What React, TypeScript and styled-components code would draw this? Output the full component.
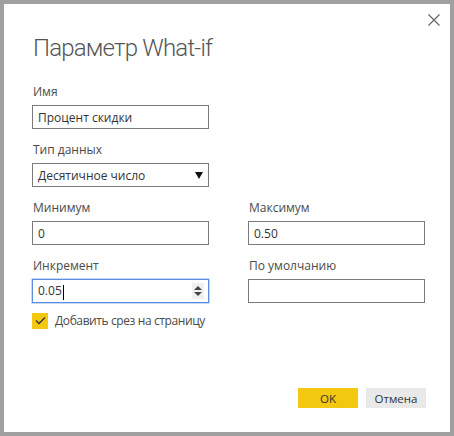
import React from "react";
import styled, { createGlobalStyle } from "styled-components";

const Global = createGlobalStyle`
  html, body { margin: 0; padding: 0; background: #a0a0a0; }
  body { font-family: "Segoe UI", "Open Sans", "Noto Sans", sans-serif; }
`;

const Dialog = styled.div`
  position: relative;
  box-sizing: border-box;
  width: 454px;
  height: 436px;
  border: 4px solid #a0a0a0;
  background: #fff;
  padding: 28px 0 0 28px;
  display: flex;
  flex-direction: column;
`;

const Close = styled.button`
  position: absolute;
  top: 6px;
  right: 6px;
  width: 20px;
  height: 20px;
  border: none;
  background: none;
  padding: 0;
  display: flex;
  align-items: center;
  justify-content: center;
`;

const Title = styled.h1`
  margin: 0 0 19px 1px;
  font-family: "Roboto", "Open Sans", sans-serif;
  font-weight: 300;
  font-size: 24px;
  line-height: 32px;
  color: #555;
  letter-spacing: -0.8px;
`;

const Grid = styled.div`
  display: grid;
  grid-template-columns: 177px 177px;
  column-gap: 39px;
  row-gap: 0;
`;

const Field = styled.div<{ $span?: boolean }>`
  display: flex;
  flex-direction: column;
  grid-column: ${(p) => (p.$span ? "1 / -1" : "auto")};
  margin-bottom: 12px;
`;

const Label = styled.label`
  font-family: "Open Sans", sans-serif;
  font-size: 12px;
  line-height: 17px;
  color: #4a4a4a;
  margin: 0 0 5px 1px;
`;

const Box = styled.div<{ $focus?: boolean }>`
  box-sizing: border-box;
  width: 177px;
  height: 24px;
  border: 1px solid ${(p) => (p.$focus ? "#5a8ce0" : "#7a7a7a")};
  box-shadow: ${(p) => (p.$focus ? "0 0 0 0.5px #8db0ea" : "none")};
  display: flex;
  align-items: center;
  padding: 0 5px;
  font-family: "Open Sans", sans-serif;
  font-size: 12px;
  color: #333;
`;

const Value = styled.span`
  flex: 1;
  white-space: nowrap;
`;

const Caret = styled.span`
  display: inline-block;
  width: 1px;
  height: 15px;
  background: #000;
  vertical-align: middle;
  margin-left: 1px;
`;

const Spinner = styled.div`
  width: 12px;
  height: 16px;
  background: #f0f0f0;
  display: flex;
  align-items: center;
  justify-content: center;
  margin-right: -1px;
`;

const CheckRow = styled.div`
  display: flex;
  align-items: center;
  gap: 7px;
  margin-top: -3px;
  font-family: "Open Sans", sans-serif;
  font-size: 12px;
  letter-spacing: -0.4px;
  color: #4a4a4a;
`;

const CheckBox = styled.div`
  width: 16px;
  height: 16px;
  background: #f2c811;
  display: flex;
  align-items: center;
  justify-content: center;
`;

const Footer = styled.div`
  margin-top: auto;
  margin-bottom: 24px;
  margin-right: 24px;
  display: flex;
  justify-content: flex-end;
  gap: 8px;
`;

const Button = styled.button<{ $primary?: boolean }>`
  width: 60px;
  height: 20px;
  border: none;
  padding: 0;
  background: ${(p) => (p.$primary ? "#f2c811" : "#e9e9e9")};
  font-family: "Open Sans", sans-serif;
  font-size: 11.5px;
  color: #333;
`;

export default function App() {
  return (
    <>
      <Global />
      <Dialog>
        <Close aria-label="Закрыть">
          <svg width="12" height="12" viewBox="0 0 12 12">
            <path d="M0.5 0.5 L11.5 11.5 M11.5 0.5 L0.5 11.5" stroke="#666" strokeWidth="1.2" />
          </svg>
        </Close>
        <Title>Параметр What-if</Title>
        <Grid>
          <Field $span>
            <Label>Имя</Label>
            <Box>
              <Value>Процент скидки</Value>
            </Box>
          </Field>
          <Field $span>
            <Label>Тип данных</Label>
            <Box>
              <Value>Десятичное число</Value>
              <svg width="8" height="7" viewBox="0 0 8 7">
                <path d="M0 0 H8 L4 7 Z" fill="#111" />
              </svg>
            </Box>
          </Field>
          <Field>
            <Label>Минимум</Label>
            <Box>
              <Value>0</Value>
            </Box>
          </Field>
          <Field>
            <Label>Максимум</Label>
            <Box>
              <Value>0.50</Value>
            </Box>
          </Field>
          <Field>
            <Label>Инкремент</Label>
            <Box $focus>
              <Value>
                0.05
                <Caret />
              </Value>
              <Spinner>
                <svg width="8" height="12" viewBox="0 0 8 12">
                  <path d="M0 5 L4 1 L8 5 Z M0 7 L8 7 L4 11 Z" fill="#444" />
                </svg>
              </Spinner>
            </Box>
          </Field>
          <Field>
            <Label>По умолчанию</Label>
            <Box />
          </Field>
        </Grid>
        <CheckRow>
          <CheckBox>
            <svg width="11" height="9" viewBox="0 0 11 9">
              <path d="M1 4.5 L4 7.5 L10 1.5" stroke="#333" strokeWidth="1.3" fill="none" />
            </svg>
          </CheckBox>
          Добавить срез на страницу
        </CheckRow>
        <Footer>
          <Button $primary>OK</Button>
          <Button>Отмена</Button>
        </Footer>
      </Dialog>
    </>
  );
}
